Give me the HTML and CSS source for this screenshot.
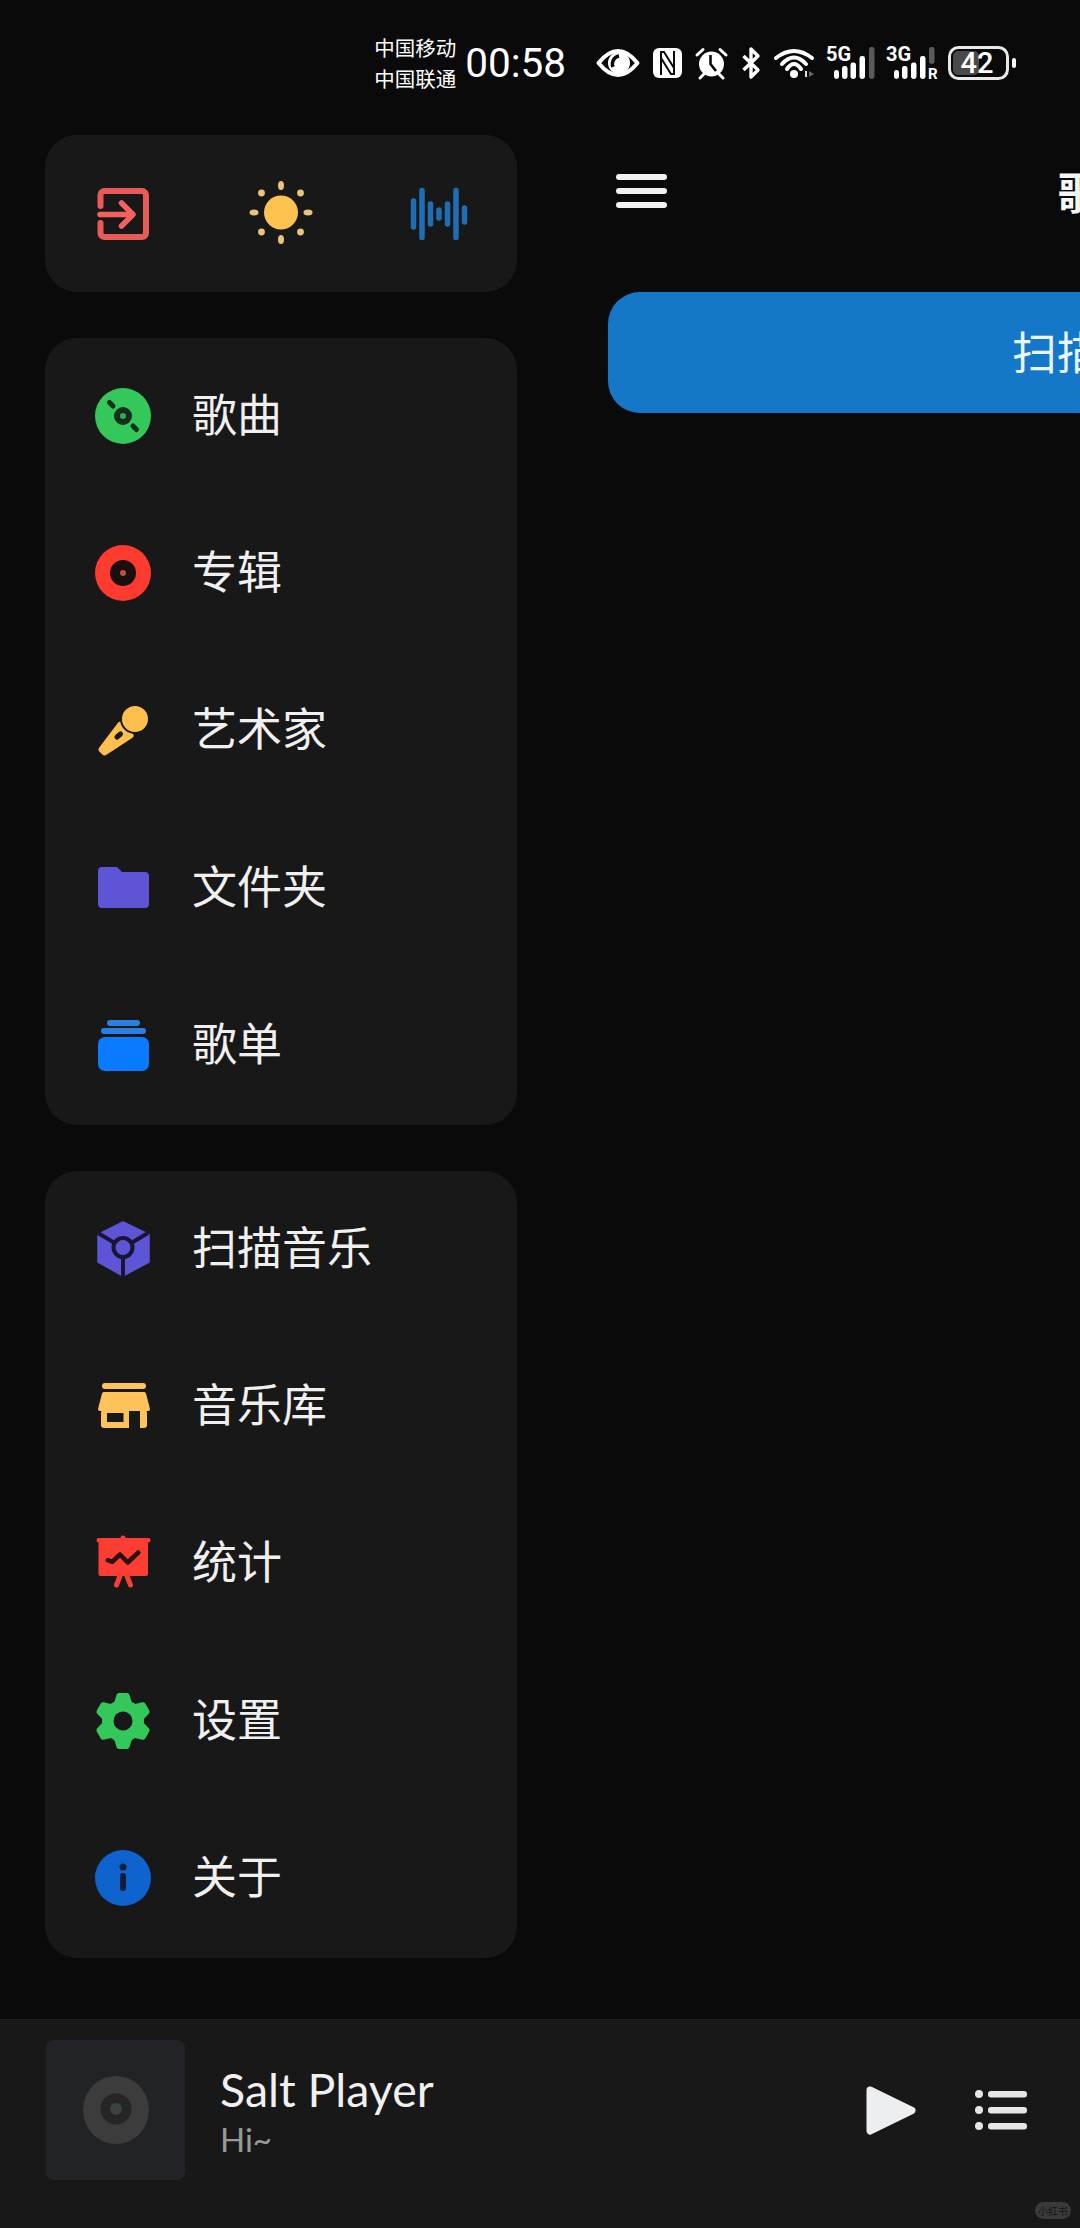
FILE: index.html
```html
<!DOCTYPE html>
<html lang="zh-CN">
<head>
<meta charset="utf-8">
<title>Salt Player</title>
<link rel="stylesheet" href="styles.css">
</head>
<body>
<div class="page">
  <header class="status">
    <div class="carrier"><span>中国移动</span><span>中国联通</span></div>
    <div class="clock">00:58</div>
    <svg class="st st-eye" viewBox="0 0 44 30"><path d="M2.500 15Q22 -9 41.500 15Q22 39 2.500 15Z" fill="none" stroke="#fff" stroke-width="4" stroke-linejoin="round"/><circle cx="23" cy="15" r="11" fill="#fff"/><path d="M17 19A8 8 0 0 1 23 8" fill="none" stroke="#0a0a0a" stroke-width="3.500"/></svg>
    <svg class="st st-n" viewBox="0 0 29 30"><rect width="29" height="30" rx="6" fill="#fff"/><path d="M8 27V4H11L21 20M21 3V26H18L8 10" fill="none" stroke="#0a0a0a" stroke-width="2"/></svg>
    <svg class="st st-alarm" viewBox="0 0 33 32"><circle cx="16.500" cy="17" r="12.500" fill="#fff"/><path d="M15.500 8V17L21 24" fill="none" stroke="#0a0a0a" stroke-width="2.600"/><path d="M2 8L8 2.500M31 8L25 2.500M5 31L9 27M28 31L24 27" stroke="#fff" stroke-width="3" stroke-linecap="round"/></svg>
    <svg class="st st-bt" viewBox="0 0 20 32"><path d="M2.500 9L17 23L10 30V2L17 9L2.500 23" fill="none" stroke="#fff" stroke-width="3.400" stroke-linejoin="round"/></svg>
    <svg class="st st-wifi" viewBox="0 0 41 30"><path d="M2 10Q20 -4 38 10M8 16Q20 3 32 16M13 21Q20 11 27 21" fill="none" stroke="#fff" stroke-width="4" stroke-linecap="round"/><circle cx="20" cy="26" r="4" fill="#fff"/><path d="M31 23H33V29H31Z" fill="#ddd"/><path d="M35 23L40 26L35 29Z" fill="#666"/></svg>
    <svg class="st st-sig" viewBox="0 -6 48 46"><text class="st-label" x="-1" y="15">5G</text><rect x="7" y="24" width="5" height="9" rx="2.400" fill="#fff"/><rect x="15" y="20" width="5.500" height="13" rx="2.400" fill="#fff"/><rect x="23.500" y="16.500" width="5.500" height="16.500" rx="2.400" fill="#fff"/><rect x="32.500" y="10" width="5.500" height="23" rx="2.400" fill="#fff"/><rect x="42" y="1" width="5.500" height="32" rx="2.400" fill="#5a5a5a"/></svg>
    <svg class="st st-sig2" viewBox="0 -6 50 46"><text class="st-label" x="-1" y="15">3G</text><rect x="7" y="24" width="5" height="9" rx="2.400" fill="#fff"/><rect x="15" y="20" width="5.500" height="13" rx="2.400" fill="#fff"/><rect x="24" y="16.500" width="5.500" height="16.500" rx="2.400" fill="#fff"/><rect x="33" y="10" width="5.500" height="23" rx="2.400" fill="#fff"/><rect x="42" y="1" width="5.500" height="17" rx="2.400" fill="#5a5a5a"/><text class="st-r" x="41" y="33">R</text></svg>
    <svg class="st st-bat" viewBox="0 -6 68 46"><rect x="1.500" y="1.500" width="58" height="31" rx="9" fill="none" stroke="#e8e8e8" stroke-width="3"/><rect x="5" y="5" width="26" height="24" rx="5" fill="#4a4a4a"/><text class="st-num" x="29" y="27" text-anchor="middle">42</text><rect x="64" y="12" width="4" height="10" rx="2" fill="#fff"/></svg>
  </header>

  <div class="content">
    <nav class="sidebar">
      <section class="card quick">
        <svg class="ic" viewBox="0 0 56 56"><path d="M5.500 20V9A4 4 0 0 1 9.500 5H47A4 4 0 0 1 51 9V47A4 4 0 0 1 47 51H9.500A4 4 0 0 1 5.500 47V37" fill="none" stroke="#e85b59" stroke-width="6" stroke-linecap="round"/><path d="M5 28.500H36M26.500 17L38 28.500L26.500 40" fill="none" stroke="#f4615e" stroke-width="5.500" stroke-linecap="round" stroke-linejoin="round"/></svg>
        <svg class="ic" viewBox="0 0 56 56"><circle cx="28" cy="26.500" r="17" fill="#fdc24f"/><g fill="#e9c47b"><ellipse cx="28" cy="-0.500" rx="3" ry="4.500"/><ellipse cx="28" cy="53.500" rx="3" ry="4.500"/><ellipse cx="1" cy="26.500" rx="4.500" ry="3"/><ellipse cx="55" cy="26.500" rx="4.500" ry="3"/><circle cx="8.500" cy="7" r="3.400"/><circle cx="47.500" cy="7" r="3.400"/><circle cx="8.500" cy="46" r="3.400"/><circle cx="47.500" cy="46" r="3.400"/></g></svg>
        <svg class="ic" viewBox="0 0 56 56"><path d="M2.500 15V41M11 4.500V51.500M19.500 18V38M28 24V32M36.500 18V38M45 4.500V51.500M53.500 22V36" fill="none" stroke="#1f6eb5" stroke-width="5.500" stroke-linecap="round"/></svg>
      </section>

      <section class="card">
        <a class="row">
          <svg class="ic" viewBox="0 0 56 56"><circle cx="28" cy="28" r="28" fill="#34c759"/><circle cx="28" cy="28" r="9" fill="#14301c"/><circle cx="28" cy="28" r="3" fill="#34a85a"/><path d="M14.500 14.500L18 18M38 38L41.500 41.500" stroke="#14301c" stroke-width="5" stroke-linecap="round"/></svg>
          <span class="label">歌曲</span>
        </a>
        <a class="row">
          <svg class="ic" viewBox="0 0 56 56"><circle cx="28" cy="28" r="28" fill="#ff3b30"/><circle cx="28" cy="28" r="13" fill="#1a0f0e"/><circle cx="28" cy="28" r="3" fill="#b9523f"/></svg>
          <span class="label">专辑</span>
        </a>
        <a class="row">
          <svg class="ic" viewBox="0 0 56 56"><path d="M25 23L35.500 33.500L9.500 50.500L6.500 47.500Z" fill="#fdc04f" stroke="#fdc04f" stroke-width="6" stroke-linejoin="round"/><path d="M22 35L25.500 32" stroke="#181818" stroke-width="5" stroke-linecap="round"/><circle cx="40" cy="17" r="14" fill="#fdc04f" stroke="#181818" stroke-width="2"/></svg>
          <span class="label">艺术家</span>
        </a>
        <a class="row">
          <svg class="ic" viewBox="0 0 56 56"><path d="M7 7H22L27 12H50A4 4 0 0 1 54 16V44A4 4 0 0 1 50 48H7A4 4 0 0 1 3 44V11A4 4 0 0 1 7 7Z" fill="#5e55d6"/></svg>
          <span class="label">文件夹</span>
        </a>
        <a class="row">
          <svg class="ic" viewBox="0 0 56 56"><rect x="12" y="3" width="33" height="6" rx="3" fill="#2a7fe0"/><rect x="6" y="11" width="45" height="6" rx="3" fill="#2a7fe0"/><rect x="3" y="20" width="51" height="34" rx="7" fill="#0a7bff"/></svg>
          <span class="label">歌单</span>
        </a>
      </section>

      <section class="card">
        <a class="row">
          <svg class="ic" viewBox="0 0 56 56"><path d="M28 1L54 13.500V41L28 55L3 41V13.500Z" fill="#5e55d6" stroke="#5e55d6" stroke-width="1.500" stroke-linejoin="round"/><path d="M3 12L28 27L53 12M28 27V56" fill="none" stroke="#181535" stroke-width="4"/><circle cx="28" cy="26.500" r="9.500" fill="#5e55d6" stroke="#181535" stroke-width="4"/></svg>
          <span class="label">扫描音乐</span>
        </a>
        <a class="row">
          <svg class="ic" viewBox="0 0 56 56"><rect x="7" y="5" width="44" height="6" rx="3" fill="#fdc35a"/><path d="M9 14H49A2 2 0 0 1 51 15.500L55 31A2 2 0 0 1 53 33H5A2 2 0 0 1 3 31L7 15.500A2 2 0 0 1 9 14Z" fill="#fdc35a"/><rect x="6" y="32" width="46" height="18" rx="3" fill="#fdc35a"/><rect x="12" y="35" width="16.500" height="9" fill="#181818"/><rect x="34" y="33" width="11" height="18" fill="#181818"/></svg>
          <span class="label">音乐库</span>
        </a>
        <a class="row">
          <svg class="ic" viewBox="0 0 56 56"><circle cx="28" cy="3" r="2.500" fill="#fb3d33"/><rect x="1.500" y="3" width="54" height="4.500" rx="2" fill="#fb3d33"/><rect x="3.500" y="6" width="49.500" height="35" rx="2" fill="#fb3d33"/><path d="M25 41L21.500 50M32 41L35.500 50" stroke="#fb3d33" stroke-width="5" stroke-linecap="round"/><path d="M12.700 25.200L17.300 26.800L25 19.500L32.700 27.500L43.300 17.500" fill="none" stroke="#2a100e" stroke-width="4.500" stroke-linecap="round" stroke-linejoin="round"/></svg>
          <span class="label">统计</span>
        </a>
        <a class="row">
          <svg class="ic" viewBox="0 0 56 56"><defs><path id="tooth" d="M19 10L21.500 2Q22 0 24 0H32Q34 0 34.500 2L37 10Z" fill="#34c759"/></defs><use href="#tooth"/><use href="#tooth" transform="rotate(60 28 28)"/><use href="#tooth" transform="rotate(120 28 28)"/><use href="#tooth" transform="rotate(180 28 28)"/><use href="#tooth" transform="rotate(240 28 28)"/><use href="#tooth" transform="rotate(300 28 28)"/><circle cx="28" cy="28" r="21" fill="#34c759"/><circle cx="28" cy="28" r="9.500" fill="#181818"/></svg>
          <span class="label">设置</span>
        </a>
        <a class="row">
          <svg class="ic" viewBox="0 0 56 56"><circle cx="28" cy="28" r="28" fill="#0f63cf"/><circle cx="28" cy="17" r="3.500" fill="#0c1f3d"/><path d="M28 26V38" stroke="#0c1f3d" stroke-width="6" stroke-linecap="round"/></svg>
          <span class="label">关于</span>
        </a>
      </section>
    </nav>

    <main class="main">
      <div class="topbar">
        <svg class="menu" viewBox="0 0 51 34"><path d="M3 3H48M3 17H48M3 31H48" stroke="#f2f2f2" stroke-width="6" stroke-linecap="round"/></svg>
        <h1 class="title">歌曲</h1>
      </div>
      <button class="scan">扫描音乐</button>
    </main>
  </div>

  <footer class="player">
    <div class="cover">
      <svg class="disc" viewBox="0 0 66 68"><ellipse cx="33" cy="34" rx="33" ry="34" fill="#3c3c3c"/><circle cx="33" cy="33" r="15.500" fill="#262626"/><circle cx="33" cy="33" r="6" fill="#3c423e"/></svg>
    </div>
    <div class="meta">
      <div class="song">Salt Player</div>
      <div class="artist">Hi~</div>
    </div>
    <div class="controls">
      <svg class="play" viewBox="0 0 51 51"><path d="M4 5L46 25.500L4 46Z" fill="#eceef0" stroke="#eceef0" stroke-width="7" stroke-linejoin="round"/></svg>
      <svg class="queue" viewBox="0 0 52 40"><g fill="#e6e6e6"><circle cx="4" cy="4" r="4"/><circle cx="4" cy="20" r="4"/><circle cx="4" cy="36" r="4"/><rect x="13" y="1" width="39" height="6.500" rx="3"/><rect x="13" y="17" width="39" height="6.500" rx="3"/><rect x="13" y="33" width="39" height="6.500" rx="3"/></g></svg>
    </div>
    <div class="mark">小红书</div>
  </footer>
</div>
</body>
</html>
```

FILE: styles.css
```css
* { box-sizing: border-box; }

html, body {
  margin: 0;
  padding: 0;
  background: #0a0a0a;
}

.page {
  position: relative;
  width: 1080px;
  height: 2228px;
  overflow: hidden;
  display: flex;
  flex-direction: column;
  background: #0a0a0a;
  color: #f0f0f0;
  font-family: "Noto Sans CJK SC", "Noto Sans", sans-serif;
}

/* Status bar */
.status {
  flex: none;
  height: 135px;
  padding: 0 64px 10px 0;
  display: flex;
  align-items: center;
  justify-content: flex-end;
  color: #fff;
}

.carrier {
  display: flex;
  flex-direction: column;
  font-size: 20.5px;
  line-height: 31px;
  width: 83px;
  white-space: nowrap;
}

.clock {
  font-family: Roboto, sans-serif;
  font-size: 40.5px;
  line-height: 48px;
  margin: 0 30px 0 8px;
}

.st { display: block; flex: none; overflow: visible; }
.st-eye { width: 44px; height: 30px; }
.st-n { width: 29px; height: 30px; margin-left: 13px; }
.st-alarm { width: 33px; height: 32px; margin-left: 13px; }
.st-bt { width: 20px; height: 32px; margin-left: 13px; }
.st-wifi { width: 41px; height: 30px; margin-left: 13px; }
.st-sig { width: 48px; height: 46px; margin-left: 12px; }
.st-sig2 { width: 50px; height: 46px; margin-left: 12px; }
.st-bat { width: 68px; height: 46px; margin-left: 11px; }

.st-label {
  font-family: Roboto, sans-serif;
  font-weight: 700;
  font-size: 20px;
  fill: #fff;
}

.st-r {
  font-family: Roboto, sans-serif;
  font-weight: 700;
  font-size: 15px;
  fill: #fff;
}

.st-num {
  font-family: Roboto, sans-serif;
  font-weight: 500;
  font-size: 29px;
  fill: #fff;
}

/* Main area */
.content {
  flex: 1;
  min-height: 0;
  display: flex;
}

.sidebar {
  flex: none;
  width: 472px;
  margin-left: 45px;
  display: flex;
  flex-direction: column;
  gap: 46px;
}

.card {
  background: #181818;
  border-radius: 32px;
  padding: 0 50px;
}

.quick {
  height: 157px;
  display: flex;
  align-items: center;
  justify-content: space-between;
}

.ic {
  display: block;
  flex: none;
  width: 56px;
  height: 56px;
  overflow: visible;
}

.row {
  height: 157.4px;
  display: flex;
  align-items: center;
  gap: 41px;
}

.row .ic {
  margin-bottom: 2px;
}

.label {
  font-size: 45px;
  line-height: 60px;
  margin-bottom: 8px;
  color: #f0f0f0;
  white-space: nowrap;
}

.main {
  flex: none;
  width: 988px;
  margin-left: 91px;
}

.topbar {
  height: 112px;
  margin-bottom: 45px;
  padding-left: 8px;
  display: grid;
  grid-template-columns: 1fr auto 1fr;
  align-items: center;
}

.menu {
  display: block;
  width: 51px;
  height: 34px;
}

.title {
  margin: 0 0 0 -8px;
  font-size: 44px;
  font-weight: 700;
  line-height: 60px;
  color: #f5f5f5;
}

.scan {
  display: block;
  width: 100%;
  height: 121px;
  padding: 0 0 4px;
  border: 0;
  border-radius: 32px;
  background: #1577c8;
  color: #eaf6ff;
  font-family: inherit;
  font-size: 45px;
}

/* Player */
.player {
  position: relative;
  flex: none;
  height: 209px;
  padding: 20px 53px 0 46px;
  display: flex;
  align-items: flex-start;
  background: #181818;
  border-top: 1px solid #222;
}

.cover {
  flex: none;
  width: 139px;
  height: 140px;
  border-radius: 8px;
  background: #212326;
  display: flex;
  align-items: center;
  justify-content: center;
}

.disc {
  display: block;
  width: 66px;
  height: 68px;
}

.meta {
  flex: 1;
  margin-left: 35px;
  height: 140px;
  display: flex;
  flex-direction: column;
  justify-content: center;
}

.song {
  font-family: Lato, sans-serif;
  font-size: 46.500px;
  line-height: 54px;
  color: #f0f0f0;
}

.artist {
  font-family: Lato, sans-serif;
  font-size: 33px;
  line-height: 40px;
  margin-top: 3px;
  color: #999;
}

.controls {
  flex: none;
  height: 140px;
  display: flex;
  align-items: center;
  gap: 58px;
}

.play {
  display: block;
  width: 51px;
  height: 51px;
}

.queue {
  display: block;
  width: 52px;
  height: 40px;
}

.mark {
  position: absolute;
  left: 1035px;
  bottom: 9px;
  width: 36px;
  height: 17px;
  border-radius: 9px;
  background: #3a3a3a;
  color: #161616;
  font-size: 10px;
  line-height: 17px;
  text-align: center;
  white-space: nowrap;
}
```
